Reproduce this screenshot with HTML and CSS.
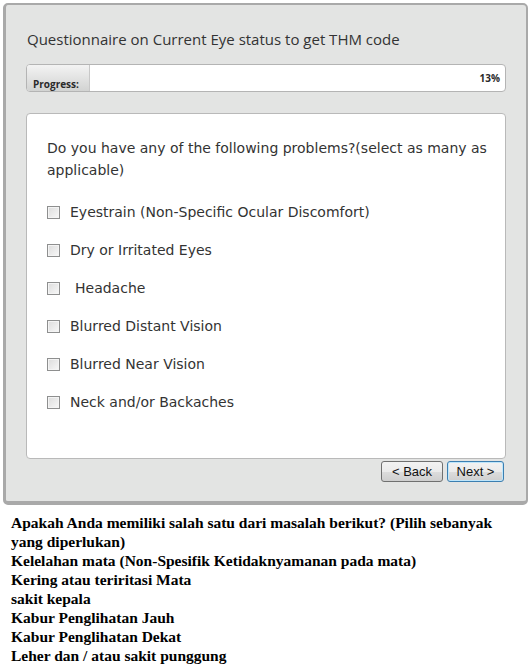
FILE: index.html
```html
<!DOCTYPE html>
<html>
<head>
<meta charset="utf-8">
<link rel="stylesheet" href="styles.css">
</head>
<body>
<div class="panel">
  <h1 class="title">Questionnaire on Current Eye status to get THM code</h1>
  <div class="progress">
    <div class="progress-label">Progress:</div>
    <div class="progress-track"><span class="progress-value">13%</span></div>
  </div>
  <div class="qbox">
    <p class="question">Do you have any of the following problems?(select as many as applicable)</p>
    <ul class="options">
      <li class="option"><span class="cb"></span><span class="lbl">Eyestrain (Non-Specific Ocular Discomfort)</span></li>
      <li class="option"><span class="cb"></span><span class="lbl">Dry or Irritated Eyes</span></li>
      <li class="option"><span class="cb"></span><span class="lbl lbl-indent">Headache</span></li>
      <li class="option"><span class="cb"></span><span class="lbl">Blurred Distant Vision</span></li>
      <li class="option"><span class="cb"></span><span class="lbl">Blurred Near Vision</span></li>
      <li class="option"><span class="cb"></span><span class="lbl">Neck and/or Backaches</span></li>
    </ul>
  </div>
  <div class="nav">
    <button class="btn btn-back">&lt; Back</button>
    <button class="btn btn-next">Next &gt;</button>
  </div>
</div>
<div class="translation">
  Apakah Anda memiliki salah satu dari masalah berikut? (Pilih sebanyak yang diperlukan)<br>
  Kelelahan mata (Non-Spesifik Ketidaknyamanan pada mata)<br>
  Kering atau teriritasi Mata<br>
  sakit kepala<br>
  Kabur Penglihatan Jauh<br>
  Kabur Penglihatan Dekat<br>
  Leher dan / atau sakit punggung
</div>
</body>
</html>
```

FILE: styles.css
```css
html, body {
  margin: 0;
  padding: 0;
  background: #ffffff;
}

.panel {
  margin: 3px 2px 0 3px;
  border: 3px solid #a9a9a9;
  border-top-width: 2px;
  border-right-width: 2px;
  border-bottom-width: 4px;
  border-radius: 5px;
  background: #e3e4e3;
  padding: 0 20px 0 20px;
  box-sizing: border-box;
  height: 502px;
}

.title {
  margin: 0;
  padding: 24px 0 0 1px;
  height: 35px;
  font-family: "Open Sans", "Segoe UI", sans-serif;
  font-weight: normal;
  font-size: 15px;
  line-height: 21px;
  color: #333333;
}

.progress {
  display: flex;
  height: 28px;
  border: 1px solid #b4b4b4;
  border-radius: 4px;
  overflow: hidden;
  box-sizing: border-box;
  background: #ffffff;
}

.progress-label {
  width: 63px;
  flex: none;
  display: flex;
  align-items: flex-end;
  padding: 0 0 0 6px;
  box-sizing: border-box;
  background: linear-gradient(#f3f3f3, #d2d3d2);
  border-right: 1px solid #c8c8c8;
  font-family: "Open Sans", "DejaVu Sans", sans-serif;
  font-weight: bold;
  font-size: 10px;
  line-height: 14px;
  color: #2a2a2a;
}

.progress-track {
  flex: 1;
  display: flex;
  align-items: center;
  justify-content: flex-end;
  padding-right: 5px;
  font-family: "Open Sans", "DejaVu Sans", sans-serif;
  font-weight: bold;
  font-size: 10px;
  color: #2a2a2a;
}

.qbox {
  margin-top: 21px;
  height: 346px;
  box-sizing: border-box;
  background: #ffffff;
  border: 1px solid #b9b9b9;
  border-radius: 4px;
  padding: 23px 14px 0 20px;
  font-family: "DejaVu Sans", Verdana, sans-serif;
  font-size: 14px;
  color: #333333;
}

.question {
  margin: 0;
  line-height: 22px;
}

.options {
  list-style: none;
  margin: 20px 0 0 0;
  padding: 0;
  display: flex;
  flex-direction: column;
  gap: 16px;
}

.option {
  display: flex;
  align-items: center;
  height: 22px;
}

.cb {
  width: 13px;
  height: 13px;
  flex: none;
  box-sizing: border-box;
  border: 1px solid #8e8f8f;
  background: linear-gradient(135deg, #dcdcdc, #f8f8f8);
  box-shadow: inset 0 0 0 1px #f4f4f4;
  margin-right: 10px;
  margin-top: 1px;
}

.lbl-indent {
  padding-left: 5px;
}

.nav {
  display: flex;
  justify-content: flex-end;
  gap: 4px;
  margin-top: 2px;
  padding-right: 2px;
}

.btn {
  height: 21px;
  padding: 0;
  border-radius: 3px;
  font-family: "Liberation Sans", Arial, sans-serif;
  font-size: 13px;
  color: #111111;
  line-height: 19px;
}

.btn-back {
  width: 62px;
  border: 1px solid #707070;
  background: linear-gradient(#f2f2f2 0%, #ebebeb 50%, #dddddd 51%, #cfcfcf 100%);
}

.btn-next {
  width: 57px;
  border: 1px solid #3c7fb1;
  box-shadow: inset 0 0 0 1px #bfe6fb;
  background: linear-gradient(#f2f2f2 0%, #ebebeb 50%, #dddddd 51%, #cfcfcf 100%);
}

.translation {
  margin: 8px 0 0 0;
  padding: 0 30px 0 11px;
  font-family: "Liberation Serif", "Times New Roman", serif;
  font-weight: bold;
  font-size: 15.5px;
  line-height: 19px;
  color: #000000;
}
```
